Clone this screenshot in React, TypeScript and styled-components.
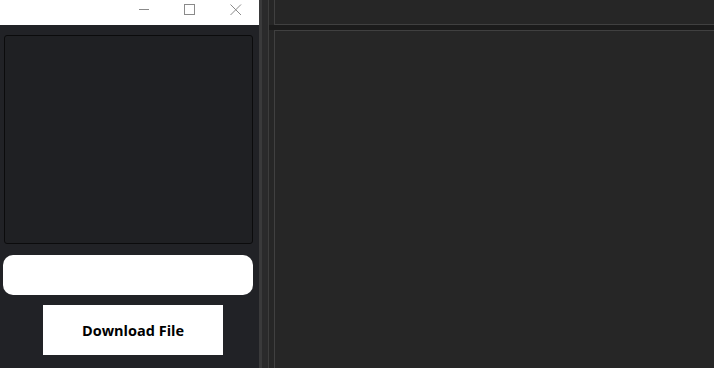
import React from "react";
import styled, { createGlobalStyle } from "styled-components";

const Global = createGlobalStyle`
  html, body { margin: 0; padding: 0; background: #262626; overflow: hidden; }
  #root { width: 714px; height: 368px; }
`;

const Root = styled.div`
  display: flex;
  width: 714px;
  height: 368px;
  font-family: "Open Sans", "Noto Sans", sans-serif;
`;

const LeftPane = styled.div`
  width: 259px;
  display: flex;
  flex-direction: column;
  background: #212226;
`;

const TitleBar = styled.div`
  height: 25px;
  background: #ffffff;
  display: flex;
  justify-content: flex-end;
  align-items: flex-start;
`;

const WinButton = styled.div`
  width: 46px;
  height: 19px;
  display: flex;
  align-items: center;
  justify-content: center;
`;

const Content = styled.div`
  flex: 1;
  display: flex;
  flex-direction: column;
  padding: 10px 6px 0 3px;
`;

const Viewer = styled.div`
  height: 207px;
  margin-left: 1px;
  background: #1f2023;
  border: 1px solid #0b0b0c;
  border-radius: 3px;
`;

const Field = styled.div`
  margin-top: 11px;
  height: 40px;
  background: #ffffff;
  border-radius: 10px;
`;

const Button = styled.button`
  margin: 10px 0 0 40px;
  width: 180px;
  height: 50px;
  border: none;
  background: #ffffff;
  color: #000;
  font-family: "Open Sans", "Noto Sans", sans-serif;
  font-weight: 700;
  font-size: 14.5px;
  padding: 0;
`;

const Splitter = styled.div`
  width: 3px;
  background: #3a3a3b;
`;

const Gutter = styled.div`
  width: 6px;
  background: #2a2a2b;
  border-right: 1px solid #3d3d3d;
`;

const RightColumn = styled.div`
  flex: 1;
  display: flex;
  flex-direction: column;
  gap: 5px;
  background: #1b1b1b;
`;

const Pane = styled.div<{ $grow?: boolean }>`
  background: #262626;
  padding-left: 5px;
  display: flex;
  ${(p) => (p.$grow ? "flex: 1;" : "height: 25px;")}
`;

const PaneInner = styled.div<{ $edge: "top" | "bottom" }>`
  flex: 1;
  border-left: 1px solid #404040;
  ${(p) => (p.$edge === "top" ? "border-top: 1px solid #404040;" : "border-bottom: 1px solid #404040;")}
`;

export default function App() {
  return (
    <>
      <Global />
      <Root>
        <LeftPane>
          <TitleBar>
            <WinButton>
              <svg width="12" height="12" viewBox="0 0 12 12">
                <line x1="1" y1="5.5" x2="11" y2="5.5" stroke="#8a8a8a" strokeWidth="1" />
              </svg>
            </WinButton>
            <WinButton>
              <svg width="12" height="12" viewBox="0 0 12 12">
                <rect x="0.5" y="0.5" width="10" height="10" fill="none" stroke="#8a8a8a" strokeWidth="1" />
              </svg>
            </WinButton>
            <WinButton>
              <svg width="12" height="12" viewBox="0 0 12 12">
                <path d="M0.5 0.5 L11 11 M11 0.5 L0.5 11" stroke="#8a8a8a" strokeWidth="1" />
              </svg>
            </WinButton>
          </TitleBar>
          <Content>
            <Viewer />
            <Field />
            <Button>Download File</Button>
          </Content>
        </LeftPane>
        <Splitter />
        <Gutter />
        <RightColumn>
          <Pane>
            <PaneInner $edge="bottom" />
          </Pane>
          <Pane $grow>
            <PaneInner $edge="top" />
          </Pane>
        </RightColumn>
      </Root>
    </>
  );
}
